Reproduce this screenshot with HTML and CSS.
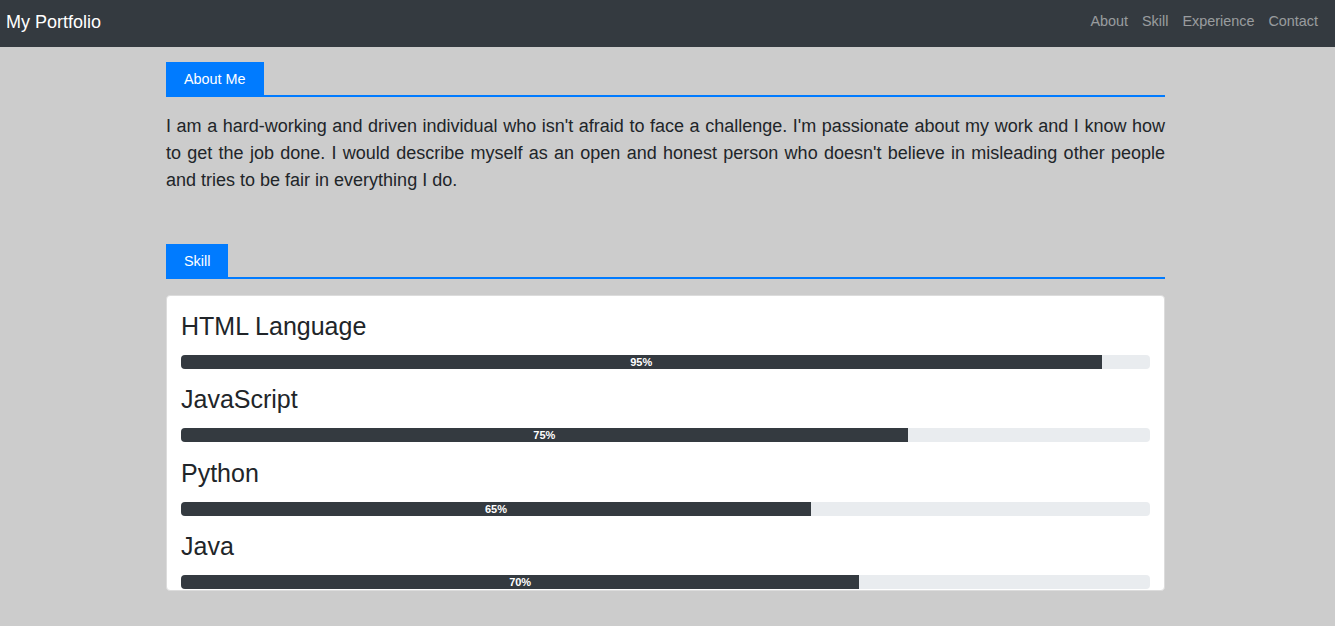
FILE: index.html
```html
<!DOCTYPE html>
<html lang="en">
<head>
<meta charset="utf-8">
<title>My Portfolio</title>
<link rel="stylesheet" href="styles.css">
</head>
<body>
<nav class="navbar">
  <a class="brand" href="#">My Portfolio</a>
  <ul class="nav-links">
    <li><a href="#about">About</a></li>
    <li><a href="#skill">Skill</a></li>
    <li><a href="#experience">Experience</a></li>
    <li><a href="#contact">Contact</a></li>
  </ul>
</nav>
<main class="content">
  <section class="section about" id="about">
    <div class="tab-bar"><span class="tab">About Me</span></div>
    <p class="about-text">I am a hard-working and driven individual who isn't afraid to face a challenge. I'm passionate about my work and I know how to get the job done. I would describe myself as an open and honest person who doesn't believe in misleading other people and tries to be fair in everything I do.</p>
  </section>
  <section class="section skill" id="skill">
    <div class="tab-bar"><span class="tab">Skill</span></div>
    <div class="card">
      <div class="skill-item">
        <h4 class="skill-name">HTML Language</h4>
        <div class="progress"><div class="progress-bar" style="width:95%">95%</div></div>
      </div>
      <div class="skill-item">
        <h4 class="skill-name">JavaScript</h4>
        <div class="progress"><div class="progress-bar" style="width:75%">75%</div></div>
      </div>
      <div class="skill-item">
        <h4 class="skill-name">Python</h4>
        <div class="progress"><div class="progress-bar" style="width:65%">65%</div></div>
      </div>
      <div class="skill-item">
        <h4 class="skill-name">Java</h4>
        <div class="progress"><div class="progress-bar" style="width:70%">70%</div></div>
      </div>
    </div>
  </section>
</main>
</body>
</html>
```
FILE: styles.css
```css
* { box-sizing: border-box; }
html, body {
  margin: 0;
  padding: 0;
}
body {
  background: #cccccc;
  color: #212529;
  font-family: "Liberation Sans", Arial, sans-serif;
  font-size: 16px;
  height: 626px;
  overflow: hidden;
}
.navbar {
  height: 47px;
  background: #343a40;
  display: flex;
  align-items: center;
  justify-content: space-between;
  padding: 0 10px 0 6px;
}
.brand {
  color: #fff;
  font-size: 18px;
  text-decoration: none;
  line-height: 1;
  margin-top: -4px;
}
.nav-links {
  list-style: none;
  display: flex;
  margin: 0;
  padding: 0;
  margin-top: -5px;
}
.nav-links a {
  display: block;
  padding: 0 7px;
  font-size: 14.4px;
  color: rgba(255, 255, 255, 0.5);
  text-decoration: none;
}
.content {
  width: 999px;
  margin-left: 166px;
  padding-top: 15px;
}
.tab-bar {
  display: flex;
  border-bottom: 2px solid #007bff;
}
.tab {
  background: #007bff;
  color: #fff;
  font-size: 14.4px;
  height: 33px;
  line-height: 33px;
  padding: 1px 18px 0;
}
.about-text {
  font-size: 18px;
  line-height: 27px;
  text-align: justify;
  margin: 16px 0 0;
}
.skill {
  margin-top: 50px;
}
.card {
  margin-top: 16px;
  background: #fff;
  border: 1px solid #dcdcdc;
  border-radius: 4px;
  padding: 15px 14px 0;
  height: 296px;
  overflow: hidden;
}
.skill-item {
  margin-bottom: 15.33px;
}
.skill-name {
  font-size: 25px;
  font-weight: 400;
  line-height: 30px;
  margin: 0 0 14px;
  color: #212529;
}
.progress {
  height: 14px;
  background: #e9ecef;
  border-radius: 4px;
  overflow: hidden;
  display: flex;
}
.progress-bar {
  background: #343a40;
  color: #fff;
  font-size: 11px;
  font-weight: 700;
  line-height: 14px;
  text-align: center;
}
```
